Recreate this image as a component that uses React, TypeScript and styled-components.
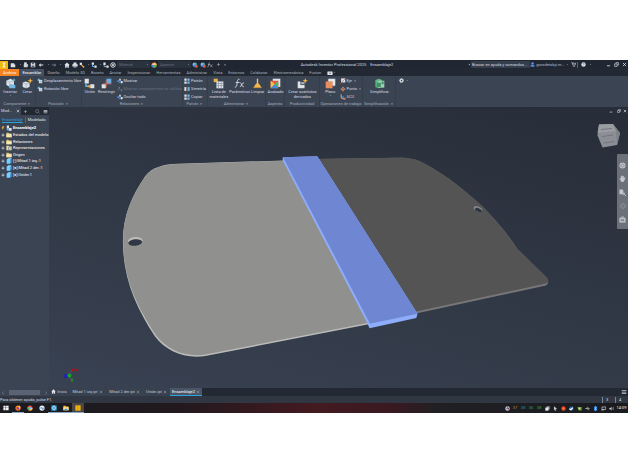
import React from "react";
import styled, { createGlobalStyle } from "styled-components";

const GlobalStyle = createGlobalStyle`
  * { box-sizing: border-box; }
  body { margin: 0; background: #fff; font-family: Roboto, "Open Sans", sans-serif; font-size: 4px; line-height: 6px; color: #d8dce3; }
  button, input, select { font: inherit; color: inherit; border: 0; margin: 0; padding: 0; background: none; border-radius: 0; }
  button { display: flex; align-items: center; justify-content: center; white-space: nowrap; cursor: pointer; }
  svg { display: block; flex: none; }
  h1, h2, p, ul { margin: 0; padding: 0; font: inherit; list-style: none; }
`;

/* ---------- icons, all on a 16 unit grid ---------- */

const W = "#dfe3e8";
const B = "#74b8e4";

const drawings: Record<string, React.ReactNode> = {
  logo: <><rect width="16" height="16" fill="#f2b90c" /><path d="M5 3h6v2H9.500v6H11v2H5v-2h1.500V5H5z" fill="#fff6d5" /></>,
  file: <><path d="M2 3h8l4 4v7H2z" fill={W} /><path d="M10 3v4h4" fill="#8b93a0" /></>,
  open: <><path d="M3 1h7v8H3z" fill={W} /><path d="M2 6h12l-2 8H2z" fill="#cfd4db" /></>,
  save: <><path d="M2 2h12v12H2z" fill={W} /><path d="M5 2h6v4H5zM4 9h8v5H4z" fill="#596270" /></>,
  undo: <path d="M7 3 2 8l5 5V9.500h7v-3H7z" fill={W} />,
  redo: <path d="m9 3 5 5-5 5V9.500H2v-3h7z" fill="#6c7482" />,
  caret: <path d="M4 6h8l-4 5z" fill="#aab0ba" />,
  caretRight: <path d="M5 3v10l6-5z" fill="#c9ced6" />,
  home: <path d="M8 1 1 8h2v7h4v-4h2v4h4V8h2z" fill={W} />,
  printer: <><path d="M4 1h8v5H4zM1 6h14v6H1z" fill={W} /><path d="M4 10h8v5H4z" fill="#96a0ad" /></>,
  brush: <><path d="M2 2h6v6H2z" fill={W} /><path d="m6 5 9 8-3 3-7-8z" fill="#eeb04a" /></>,
  link: <><path d="M2 1h6v6H2zM9 9h6v6H9z" fill={W} /><path d="M4 7v5h5" stroke={B} strokeWidth="2.500" fill="none" /></>,
  ring: <><circle cx="8" cy="8" r="6" fill="none" stroke={W} strokeWidth="2.500" /><path d="M5 5l6 6M11 5l-6 6" stroke={W} strokeWidth="2" /></>,
  sphere: <><circle cx="8" cy="8" r="7" fill="#e95d4b" /><path d="M8 1a7 7 0 0 1 7 7H8z" fill="#f6c744" /><path d="M8 15a7 7 0 0 1-7-7h7z" fill="#3f7fe0" /><path d="M15 8a7 7 0 0 1-7 7V8z" fill="#4cb963" /><circle cx="6" cy="6" r="2.500" fill="#fff" opacity=".7" /></>,
  sphereEdit: <><circle cx="7" cy="7" r="6" fill="#4b86df" /><path d="M7 1a6 6 0 0 1 6 6H7z" fill="#58b56c" /><path d="M8 8h7v7H8z" fill="#e2573f" /><circle cx="5" cy="5" r="2" fill="#fff" opacity=".8" /></>,
  plus: <path d="M7 3h2v4h4v2H9v4H7V9H3V7h4z" fill="#aab0ba" />,
  fx: <><path d="M8 2C5 1 5 4 4.500 8S3 14 1 13M2.500 6.500H8" stroke={W} strokeWidth="1.300" fill="none" /><path d="M9 7c2-1 2 7 5.500 5.500M14.500 7C12 6 11 13 8.500 12.500" stroke={W} strokeWidth="1.200" fill="none" /></>,
  user: <><circle cx="8" cy="5" r="4" fill="#5f94ee" /><path d="M2 10h12v5H2z" fill="#5f94ee" /></>,
  cart: <><path d="M1 2h3l2 8h7l2-6H5" fill="none" stroke={W} strokeWidth="2" /><circle cx="7" cy="13.500" r="1.500" fill={W} /><circle cx="12" cy="13.500" r="1.500" fill={W} /></>,
  help: <><circle cx="8" cy="8" r="7" fill={W} /><path d="M5.500 6.500c0-4 5-3.500 5-.5C10.500 8 8 8 8 10M8 11.500v2" fill="none" stroke="#2a6cc4" strokeWidth="1.800" /></>,
  minimize: <path d="M3 11h10v2.500H3z" fill={W} />,
  restore: <><path d="M6 5V2h8v8h-3" fill="none" stroke={W} strokeWidth="2" /><path d="M2 6h8v8H2z" fill="none" stroke={W} strokeWidth="2" /></>,
  close: <path d="m3 3 10 10M13 3 3 13" stroke={W} strokeWidth="2.500" />,
  closeDim: <path d="m3 3 10 10M13 3 3 13" stroke="#a4abb6" strokeWidth="2" />,
  insert: <><path d="m2 4 6-3 5 3v6l-6 3-5-3z" fill={W} /><path d="m2 4 5 2 6-2M7 6v7" stroke="#9fb0bf" fill="none" /><path d="M6 9h5l1 1h3v5H6z" fill={B} /><path d="M13 1v4M11 3h4" stroke={B} strokeWidth="1.200" /></>,
  create: <><path d="m1 7 4-2 6 2v6l-5 2-5-2z" fill={W} /><path d="m1 7 5 2 5-2M6 9v6" stroke="#9aa3af" fill="none" /><path d="m12 0 1 3 3 1-3 1-1 3-1-3-3-1 3-1z" fill="#f5b83d" /></>,
  derive: <><path d="M1 5h4v5h6v5H1z" fill={W} /><path d="M6 6h5v3H6z" fill="#aab3bf" /><path d="m12 0 1 3 3 1-3 1-1 3-1-3-3-1 3-1z" fill="#f5b83d" /></>,
  move: <><path d="M5 5h9v9H5z" fill={W} /><path d="M2 2h5v3H5v3H2z" fill={B} /><path d="M10 5v9M5 10h9" stroke="#8994a3" /></>,
  joint: <><path d="M1 1h6v7H1zM9 9h6v6H9z" fill={W} /><path d="M3 8v4h5" stroke={B} strokeWidth="2" fill="none" /><circle cx="8" cy="12" r="2" fill="#eaa746" /></>,
  constrain: <><path d="M8 1h7v7H8z" fill="#6aaee8" /><path d="M1 9h6v6H1z" fill={W} /><path d="M7.500 3v11M3 8.500h12" stroke="#d97568" strokeWidth="1.200" /></>,
  show: <><path d="M6 2h4v5H6zM10 8h5v6h-5z" fill={W} /><path d="M1 6h5v5H1z" fill="#438fe5" /><path d="M6 12h4" stroke={B} strokeWidth="2" /></>,
  showDim: <path d="M4 2h4v5H4zM10 8h4v6h-4zM1 9h5v2H1z" fill="#687180" />,
  pattern: <><path d="M1 1h6v6H1zM1 9h6v6H1z" fill={W} /><path d="M9 1h6v6H9zM9 9h6v6H9z" fill={B} /></>,
  mirror: <><path d="M1 3h5v10H1z" fill={W} /><path d="M10 3h5v10h-5z" fill={B} /><path d="M8 1v14" stroke="#e2a44a" /></>,
  list: <><path d="M1 1h6v5H1z" fill="#e4b153" /><path d="M5 5h10v10H5z" fill={W} /><path d="M8 5v10M12 5v10M5 8h10M5 11h10" stroke="#8791a0" /></>,
  clean: <><path d="M7 1h2v8H7z" fill="#e1c386" /><path d="M6 8h4l4 6H2z" fill="#efb84d" /><path d="M2 14h12" stroke="#c98a35" /></>,
  finish: <><path d="M4 1h11v12H4z" fill={W} /><path d="M1 4h11v11H1z" fill="#eb5a45" /><path d="m1 4 6 5-6 6z" fill="#edc942" /><path d="m1 15 6-6 5 6z" fill="#3d8be5" /><path d="m12 4-5 5 5 6z" fill="#48b968" /></>,
  plane: <><path d="M5 1h10v10H5z" fill="#d6dae0" /><path d="M1 5h10v10H1z" fill="#e88e5d" /><path d="M4 3h9v9" stroke="#fff" fill="none" /></>,
  axis: <><path d="M3 1h11v11H3z" fill={W} /><path d="m1 15 12-12" stroke="#d7663f" strokeWidth="2" /></>,
  point: <path d="m8 1 3 4H9v2h2V5l4 3-4 3V9H9v2h2l-3 4-3-4h2V9H5v2L1 8l4-3v2h2V5H5z" fill="#d98d65" />,
  ucs: <><path d="M3 1v9l9 4" stroke={W} strokeWidth="2" fill="none" /><circle cx="8" cy="8" r="2" fill="#54a9ed" /><path d="M10 10h5v5h-5z" fill="#d87352" /></>,
  simplify: <><path d="m2 3 5-2 5 2v10l-5 2-5-2z" fill="#5bb982" /><path d="M6 4h9v10H6z" fill="#a6cdb7" /><path d="M4 7h6v6H4zM11 5h3v4h-3z" fill="#3e9368" /></>,
  gear: <><circle cx="8" cy="8" r="5" fill="none" stroke={W} strokeWidth="4" strokeDasharray="3 1" /><circle cx="8" cy="8" r="4" fill="none" stroke={W} strokeWidth="3" /></>,
  camera: <><rect x="1" y="4" width="14" height="9" rx="1" fill={W} /><circle cx="8" cy="8.500" r="2" fill="#596270" /></>,
  search: <><circle cx="7" cy="7" r="5" fill="none" stroke="#9ea5b1" strokeWidth="1.500" /><path d="m11 11 4 4" stroke="#9ea5b1" strokeWidth="1.500" /></>,
  menu: <path d="M2 3h12v2.500H2zM2 7h12v2.500H2zM2 11h12v2.500H2z" fill="#c4c9d1" />,
  folder: <><path d="M1 2h6l1 2h7v10H1z" fill="#e0c67e" /><path d="M1 6h14v8H1z" fill="#f7e6ae" /></>,
  reps: <><path d="M1 2h6l1 2h7v10H1z" fill="#f1dfa4" /><path d="M5 6h7v6H5z" fill="#60748b" /><path d="M7 7h5v3H7z" fill="#fff" /></>,
  part: <><path d="m2 4 4-3h9v10l-4 4H2z" fill="#3c9edb" /><path d="M2 4h9v11H2z" fill="#7dcbf6" /><path d="m2 4 4-3h9l-4 3z" fill="#b9e7ff" /></>,
  assembly: <><path d="M2 1h6v7H2zM7 8h8v7H7z" fill={W} /><path d="M2 8h5v6H2z" fill={B} /></>,
  bolt: <path d="M7 0h6L9 6h4L4 16l2-7H2z" fill="#f3a72d" />,
  expand: <path d="M6.500 2h3v4.500H14v3H9.500V14h-3V9.500H2v-3h4.500z" fill="#d2d6dd" />,
  left: <path d="M11 2 5 8l6 6" stroke="#8f98a6" strokeWidth="2" fill="none" />,
  right: <path d="m5 2 6 6-6 6" stroke="#8f98a6" strokeWidth="2" fill="none" />,
  wheel: <><circle cx="8" cy="8" r="7" fill="#bfc3c8" /><circle cx="8" cy="8" r="3.500" fill="none" stroke="#7e838b" strokeWidth="1.500" /><path d="M1 8h4M11 8h4" stroke="#7e838b" /></>,
  hand: <path d="M4 8V3h2v4V1h2v6l1-5h2v6l2-3h2l-3 8-2 3H6L1 9l1-1z" fill="#c3c7cc" />,
  zoom: <><path d="M1 1h7l2 3v8H1z" fill="#c3c7cc" /><circle cx="11" cy="11" r="3" fill="#adb1b8" /><path d="m13 13 3 3" stroke="#d2d5d9" strokeWidth="2" /></>,
  orbit: <><path d="m8 1 7 7-7 7-7-7z" fill="#878c94" /><path d="M4 8h8M8 4v8" stroke="#6b7079" strokeWidth="2" /></>,
  look: <><path d="M1 4h14v11H1z" fill="#c0c4c9" /><path d="M4 7h8v5H4z" fill="#858b94" /><path d="M5 1h6v3H5z" fill="#b2b6bc" /></>,
  windows: <path d="M1 2h6v5H1zM8 2h7v5H8zM1 8h6v6H1zM8 8h7v6H8z" fill="#f4f4f4" />,
  firefox: <><circle cx="8" cy="8" r="7" fill="#f36a28" /><circle cx="9" cy="8" r="3.500" fill="#6a3bc9" /><path d="M2 5c5-3 7-1 11-4 2 4 2 8-1 11 0-5-4-8-10-7z" fill="#ffbd38" /></>,
  chrome: <><circle cx="8" cy="8" r="7" fill="#e94637" /><path d="M8 8 1 5c-1 6 3 10 6 10z" fill="#39a757" /><path d="M8 8h7c0 4-3 7-8 7z" fill="#f7c936" /><circle cx="8" cy="8" r="3.500" fill="#fff" /><circle cx="8" cy="8" r="2.500" fill="#4285f4" /></>,
  swirl: <><circle cx="8" cy="8" r="7" fill="#e4edf8" /><path d="M3 9c4-6 8 5 10-2M8 9l3 4" stroke="#4779b8" strokeWidth="2.500" fill="none" /></>,
  app: <><rect x="1" y="1" width="14" height="14" fill="#28a6e3" /><path d="M8 2v12M2 8h12" stroke="#fff" strokeWidth="3" /><path d="M6 6h4v4H6z" fill="#126dac" /></>,
  explorer: <><path d="M1 2h6l1 2h7v10H1z" fill="#f2ba31" /><path d="M1 6h14v8H1z" fill="#ffe194" /><path d="M4 10h8v4H4z" fill="#399ddc" /></>,
  inventor: <><rect x="1" y="1" width="14" height="14" fill="#f2b90c" /><path d="M6 4h4v8H6z" fill="#d39a05" /></>,
  discord: <><circle cx="8" cy="8" r="7" fill="#d8d5df" /><path d="M8 1v7l6 4" stroke="#df4956" strokeWidth="3" /><circle cx="7" cy="8" r="3" fill="#5870d1" /></>,
  layers: <><path d="M5 1h10v10H5z" fill="#9ea3ab" /><path d="M1 5h10v10H1z" fill="#e3e5e8" /></>,
  cursor: <path d="m3 1 10 8-5 1 3 5-3 1-2-5-3 3z" fill="#bfc3ca" />,
  red: <><circle cx="8" cy="8" r="7" fill="#e54724" /><circle cx="8" cy="8" r="3" fill="#ef954b" /></>,
  steam: <><circle cx="8" cy="8" r="7" fill="#285e9b" /><path d="m1 9 5 3 6-7" stroke="#fff" strokeWidth="4" fill="none" /></>,
  nvidia: <><path d="M1 3h14v11H5z" fill="#649b32" /><circle cx="8" cy="8" r="3" fill="#d4dbc9" /></>,
  usb: <path d="M1 8h14M4 8l4-4h3M6 8l4 4h3" stroke="#cdd1d7" strokeWidth="2" fill="none" />,
  bluetooth: <><rect x="3" width="10" height="16" rx="5" fill="#2180e3" /><path d="m5 5 6 6-3 3V2l3 3-6 6" fill="none" stroke="#fff" /></>,
  network: <path d="M3 3h12v8H3zM8 11v3M1 13h6" fill="none" stroke={W} strokeWidth="2" />,
  sound: <><path d="M1 6h3l4-4v12l-4-4H1z" fill="#c8ccd2" /><path d="M10 5c2 2 2 4 0 6M13 3c3 3 3 7 0 10" stroke="#c8ccd2" strokeWidth="1.500" fill="none" /></>,
};

const Icon = ({ name, size = 6 }: { name: string; size?: number }) => (
  <svg width={size} height={size} viewBox="0 0 16 16" aria-hidden="true">{drawings[name]}</svg>
);

/* ---------- frame ---------- */

const Screen = styled.main`
  margin-top: 60px;
  display: flex;
  flex-direction: column;
  background: #2c333f;
  overflow: hidden;
`;

const TitleBar = styled.header`
  display: flex;
  align-items: center;
  height: 9px;
  background: #202732;
`;
const Tool = styled.button<{ $w: number }>`
  flex: none;
  width: ${(p) => p.$w}px;
  height: 8px;
`;
const PickerBox = styled.label`
  display: flex;
  align-items: center;
  width: 33px;
  height: 7px;
  padding: 0 1px 0 2px;
  background: #2a323e;
`;
const Picker = styled.select`
  appearance: none;
  flex: 1;
  min-width: 0;
  height: 7px;
  color: #68717f;
  font-style: italic;
`;
const AppTitle = styled.h1`
  flex: 1;
  display: flex;
  justify-content: center;
  gap: 4px;
  white-space: nowrap;
`;
const Search = styled.input`
  width: 59px;
  height: 7px;
  padding: 0 1px;
  background: #343d4a;
  &::placeholder { color: #d8dce3; opacity: 1; }
`;
const Account = styled.button`
  width: 39px;
  gap: 1px;
  color: #b8bec8;
`;
const Separator = styled.span`
  width: 1px;
  height: 6px;
  background: #596270;
`;
const AppControls = styled.div`
  display: flex;
  margin-left: 12px;
`;

const RibbonTabs = styled.nav`
  display: flex;
  height: 7px;
  background: #222933;
`;
const RibbonTab = styled.button<{ $tone?: "file" | "active" }>`
  padding: 0 3px;
  height: 7px;
  color: ${(p) => (p.$tone ? "#fff" : "#aab1bd")};
  background: ${(p) => (p.$tone === "file" ? "#f58220" : p.$tone === "active" ? "#465061" : "none")};
`;

const Ribbon = styled.section`
  display: flex;
  height: 31px;
  background: #3b4453;
`;
const Group = styled.section<{ $w: number }>`
  flex: none;
  width: ${(p) => p.$w}px;
  display: flex;
  flex-direction: column;
  border-right: 1px solid #353d4a;
`;
const GroupBody = styled.div`
  flex: 1;
  display: flex;
  padding: 1px 0 0 1px;
`;
const GroupName = styled.h2`
  display: flex;
  align-items: center;
  justify-content: center;
  gap: 1px;
  height: 6px;
  color: #a3abb8;
  white-space: nowrap;
`;
const Big = styled.button`
  flex: 1 1 auto;
  flex-direction: column;
  justify-content: flex-start;
  line-height: 5px;
  padding-top: 1px;
  height: 24px;
  white-space: pre;
`;
const Stack = styled.div`
  display: flex;
  flex-direction: column;
  flex: none;
`;
const Small = styled.button<{ $dim?: boolean }>`
  justify-content: flex-start;
  height: 8px;
  gap: 1px;
  color: ${(p) => (p.$dim ? "#687180" : "#d8dce3")};
`;

const Work = styled.div`
  display: flex;
  height: 289px;
`;
const Browser = styled.aside`
  flex: none;
  width: 49px;
  display: flex;
  flex-direction: column;
  background: #3b4453;
  overflow: hidden;
`;
const BrowserTabs = styled.div`
  display: flex;
  align-items: center;
  height: 8px;
  background: #222933;
`;
const BrowserTab = styled.button`
  width: 21px;
  height: 8px;
  gap: 4px;
  background: #3b4453;
`;
const Modes = styled.div`
  display: flex;
  align-items: center;
  height: 10px;
  padding-left: 2px;
  gap: 2px;
`;
const Mode = styled.button<{ $on?: boolean }>`
  height: 6px;
  font-family: "Liberation Sans Narrow", Roboto, sans-serif;
  color: ${(p) => (p.$on ? "#2ea3dc" : "#e5e8ec")};
  text-decoration: ${(p) => (p.$on ? "underline" : "none")};
`;
const Tree = styled.ul`
  display: grid;
  grid-template-rows: repeat(8, 1fr);
  height: 53px;
`;
const Node = styled.button<{ $bold?: boolean }>`
  height: 100%;
  padding-left: 1px;
  gap: 1px;
  font-family: "Liberation Sans Narrow", Roboto, sans-serif;
  font-weight: ${(p) => (p.$bold ? 700 : 400)};
  color: #fff;
`;
const Scroller = styled.div`
  margin-top: auto;
  display: flex;
  align-items: center;
  justify-content: space-between;
  height: 7px;
  padding: 0 1px;
`;
const Thumb = styled.span`
  width: 31px;
  height: 5px;
  background: #596373;
`;

const Right = styled.section`
  flex: 1;
  min-width: 0;
  display: flex;
  flex-direction: column;
`;
const Viewport = styled.div`
  position: relative;
  flex: 1;
  min-height: 0;
  background: linear-gradient(195deg, #282e39 5%, #2f3643 42%, #394252 100%);
`;
const Scene = styled.svg`
  width: 100%;
  height: 100%;
`;
const WindowControls = styled.div`
  position: absolute;
  top: 0;
  right: 0;
  display: flex;
`;
const NavBar = styled.nav`
  position: absolute;
  top: 47px;
  right: 0;
  width: 11px;
  height: 75px;
  padding: 7px 0 6px;
  display: flex;
  flex-direction: column;
  align-items: center;
  justify-content: space-between;
  background: #6b7079;
  border-radius: 1px;
`;
const DocTabs = styled.nav`
  display: flex;
  height: 8px;
  background: #222933;
`;
const DocTab = styled.button<{ $w: number; $on?: boolean }>`
  width: ${(p) => p.$w}px;
  height: 8px;
  gap: 1px;
  background: ${(p) => (p.$on ? "#4a5668" : "#384150")};
  border-bottom: 1px solid ${(p) => (p.$on ? "#2ea3dc" : "#384150")};
  color: ${(p) => (p.$on ? "#fff" : "#c3c8d0")};
`;
const Spring = styled.span`
  flex: 1;
`;
const Status = styled.footer`
  display: flex;
  align-items: center;
  height: 7px;
  background: #303742;
`;
const Count = styled.span`
  width: 13px;
  padding-left: 3px;
  border-left: 1px solid #7b8492;
`;
const Taskbar = styled.footer`
  display: flex;
  align-items: center;
  height: 10px;
  background: linear-gradient(90deg, #1a1c20 0, #21191e 28%, #431a20 50%, #3a1920 62%, #202024 70%, #1a1b1e 100%);
`;
const Task = styled.button<{ $open?: boolean; $on?: boolean }>`
  width: 12px;
  height: 10px;
  background: ${(p) => (p.$on ? "#4b4744" : "none")};
  border-bottom: 1px solid ${(p) => (p.$open ? "#8aa6c4" : "transparent")};
`;
const Tray = styled.div`
  display: flex;
  align-items: center;
`;
const TrayItem = styled.button<{ $c?: string }>`
  width: 8px;
  height: 8px;
  color: ${(p) => p.$c || "#fff"};
`;
const Clock = styled.time`
  width: 13px;
  text-align: center;
  color: #f1f1f1;
`;

const quickTools: [string, number, string][] = [
  ["logo", 8, "Inventor"], ["file", 10, "Nuevo"], ["caret", 4, "Opciones de nuevo"], ["open", 7, "Abrir"], ["save", 7, "Guardar"],
  ["undo", 10, "Deshacer"], ["caret", 4, "Historial"], ["redo", 8, "Rehacer"], ["caret", 4, "Acciones"], ["home", 10, "Inicio"],
  ["printer", 6, "Imprimir"], ["brush", 8, "Actualizar"], ["caret", 4, "Opciones de actualizar"], ["link", 8, "Seleccionar"],
  ["caret", 4, "Opciones de selección"], ["joint", 7, "Propiedades"], ["ring", 8, "Ajustes"],
];
const tabs = ["Diseño", "Modelo 3D", "Boceto", "Anotar", "Inspeccionar", "Herramientas", "Administrar", "Vista", "Entornos", "Colaborar", "Electromecánica", "Fusion"];
const tree: [string, string][] = [
  ["assembly", "Ensamblaje2"], ["folder", "Estados del modelo: [Pr"], ["folder", "Relaciones"], ["reps", "Representaciones"],
  ["folder", "Origen"], ["part", "[-]:Mitad 1 izq.:1"], ["part", "[●]:Mitad 2 der.:1"], ["part", "[●]:Unión:1"],
];
const docs: [string, number][] = [["Mitad 1 izq.ipt", 37], ["Mitad 2 der.ipt", 37], ["Unión.ipt", 27]];
const navTools: [string, number, string][] = [["wheel", 7, "Rueda de navegación"], ["hand", 7, "Encuadre"], ["zoom", 7, "Zoom"], ["orbit", 8, "Órbita"], ["look", 7, "Mirar a"]];
const tasks: [string, boolean, string][] = [["windows", false, "Menú Inicio"], ["firefox", true, "Firefox"], ["chrome", false, "Chrome"], ["swirl", false, "Navegador"], ["app", true, "Aplicación"], ["explorer", true, "Explorador"], ["inventor", true, "Inventor"]];
const temperatures: [string, string][] = [["37", "#b58c24"], ["38", "#267fb4"], ["36", "#249e65"], ["38", "#3f9d34"]];
const trayIcons = ["layers", "cursor", "red", "steam", "nvidia", "usb", "bluetooth", "network", "sound"];

const IconButton = ({ icon, label, w = 8, size = 6 }: { icon: string; label: string; w?: number; size?: number }) => (
  <Tool $w={w} aria-label={label}><Icon name={icon} size={size} /></Tool>
);

const PickerField = ({ label }: { label: string }) => (
  <PickerBox>
    <Picker aria-label={label}><option>{label}</option></Picker>
    <Icon name="caret" size={3} />
  </PickerBox>
);

const RibbonGroup = ({ name, w, menu, children }: { name: string; w: number; menu?: boolean; children: React.ReactNode }) => (
  <Group $w={w}>
    <GroupBody>{children}</GroupBody>
    <GroupName>{name}{menu && <Icon name="caret" size={4} />}</GroupName>
  </Group>
);
const BigButton = ({ icon, children, menu }: { icon: string; children: React.ReactNode; menu?: boolean }) => (
  <Big><Icon name={icon} size={11} /><span>{children}</span>{menu && <Icon name="caret" size={3} />}</Big>
);
const SmallButton = ({ icon, children, dim, menu }: { icon: string; children: React.ReactNode; dim?: boolean; menu?: boolean }) => (
  <Small $dim={dim} disabled={dim}><Icon name={icon} /><span>{children}</span>{menu && <Icon name="caret" size={4} />}</Small>
);

const Model = () => (
  <Scene viewBox="49 107 579 280" role="img" aria-label="Ensamblaje de tres piezas">
    <path d="M317 158.500 398 157.200C410 157 418 159 426 164 445 174 464 189 483 206.500 498 222 508 234 517 248L547 277.500Q550 282 546 285L416 313Z" fill="#777" />
    <path d="M317 158.500 398 157.200C410 157 418 159 426 164 445 174 464 189 483 206.500 498 222 508 234 517 248L547 277.500Q550 281 546 283L416 311Z" fill="#545454" />
    <ellipse cx="478" cy="208.500" rx="4.500" ry="2.400" transform="rotate(22 478 208.500)" fill="#85878a" />
    <ellipse cx="478.500" cy="209.500" rx="3.600" ry="1.700" transform="rotate(22 478.500 209.500)" fill="#2e3541" />
    <path d="M284 160 178 163.200C164 163.500 151 167 145 176 132 195 123 215 122.900 240 122.800 278 136 307 155 336 166 350 182 358 204 355.800L370 323.500 300 190Z" fill="#bbbbb9" />
    <path d="M284 160.300 178 163.400C164 163.800 151 167.300 145.200 176.300 132 195 123.200 215 123.200 240 123.200 278 137 306 156 334.700 167 348.500 183 356.500 204 354.300L370 322 300 190Z" fill="#90908e" />
    <ellipse cx="135.300" cy="240.500" rx="7.400" ry="4" transform="rotate(-5 135 240.500)" fill="#bdbdbb" />
    <ellipse cx="135.200" cy="242" rx="7" ry="3.200" transform="rotate(-5 135 242)" fill="#303846" />
    <path d="m282.700 156.700 34.600-1L417.500 313.300 416.300 317.500 369.500 327.700 367 322 282.700 160Z" fill="#8eadfd" />
    <path d="m283 156.700 34.300-1L417.500 313.300 370 323.300Z" fill="#6f87d3" />
    <path d="m68 375 5-6M68 375l4 5" stroke="#4c5667" strokeWidth="1" />
    <circle cx="73" cy="369.500" r="1.500" fill="#b80d18" />
    <path d="m75.500 368 2.500 3m0-3-2.500 3" stroke="#b80d18" />
    <path d="M64.500 373.500h2.500v4h-2.500z" fill="#1920c9" />
    <circle cx="69.500" cy="375" r="2" fill="#17a51d" />
    <path d="m70.500 378 1.500 1.500 1.500-1.500m-1.500 1.500v2" stroke="#17a51d" fill="none" />
    <path d="m599 124 14-.500 7 9-3 12-14.500 2.500-5-12Z" fill="#8b8f95" />
    <path d="m599 124 14-.500 3 7-18.500 2Z" fill="#999da2" />
    <path d="m613 123.500 7 9-3 12-1-14Z" fill="#7c8188" />
    <path d="m601 129 11-1M602 136l11-1.500M603.500 142.500l11-1.500" stroke="#71767e" strokeWidth="1" />
  </Scene>
);

export default function App() {
  return (
    <>
      <GlobalStyle />
      <Screen>
        <TitleBar>
          {quickTools.map(([icon, w, label], i) => (
            <IconButton key={i} icon={icon} w={w} label={label} size={icon === "caret" ? 3 : icon === "logo" ? 8 : 6} />
          ))}
          <PickerField label="Material" />
          <IconButton icon="sphere" label="Aspectos" />
          <PickerField label="Aspecto" />
          <IconButton icon="sphereEdit" label="Ajustar aspecto" />
          <IconButton icon="sphereEdit" w={7} label="Borrar aspecto" />
          <IconButton icon="fx" label="Parámetros" />
          <IconButton icon="plus" size={5} label="Añadir" />
          <IconButton icon="caret" w={5} size={4} label="Personalizar" />
          <AppTitle><span>Autodesk Inventor Professional 2025</span><span>Ensamblaje2</span></AppTitle>
          <IconButton icon="caretRight" w={4} size={3} label="Mostrar búsqueda" />
          <Search aria-label="Buscar" placeholder="Buscar en ayuda y comandos..." />
          <Account><Icon name="user" size={5} />gorodetskyi.m...<Icon name="caret" size={3} /></Account>
          <IconButton icon="cart" size={5} label="Tienda" />
          <Separator />
          <IconButton icon="help" w={10} size={5} label="Ayuda" />
          <IconButton icon="caret" w={4} size={3} label="Más ayuda" />
          <AppControls>
            <IconButton icon="minimize" size={5} label="Minimizar" />
            <IconButton icon="restore" size={5} label="Restaurar" />
            <IconButton icon="close" size={5} label="Cerrar" />
          </AppControls>
        </TitleBar>

        <RibbonTabs>
          <RibbonTab $tone="file">Archivo</RibbonTab>
          <RibbonTab $tone="active">Ensamblar</RibbonTab>
          {tabs.map((t) => <RibbonTab key={t}>{t}</RibbonTab>)}
          <RibbonTab aria-label="Vista de cinta"><Icon name="camera" size={6} /><Icon name="caret" size={3} /></RibbonTab>
        </RibbonTabs>

        <Ribbon>
          <RibbonGroup name="Componente" w={36} menu>
            <BigButton icon="insert" menu>Insertar</BigButton>
            <BigButton icon="create">Crear</BigButton>
          </RibbonGroup>
          <RibbonGroup name="Posición" w={46} menu>
            <Stack>
              <SmallButton icon="move">Desplazamiento libre</SmallButton>
              <SmallButton icon="move">Rotación libre</SmallButton>
            </Stack>
          </RibbonGroup>
          <RibbonGroup name="Relaciones" w={101} menu>
            <BigButton icon="joint">Unión</BigButton>
            <BigButton icon="constrain">Restringir</BigButton>
            <Stack>
              <SmallButton icon="show">Mostrar</SmallButton>
              <SmallButton icon="showDim" dim>Mostrar componentes no válidos</SmallButton>
              <SmallButton icon="show">Ocultar todo</SmallButton>
            </Stack>
          </RibbonGroup>
          <RibbonGroup name="Patrón" w={25} menu>
            <Stack>
              <SmallButton icon="pattern">Patrón</SmallButton>
              <SmallButton icon="mirror">Simetría</SmallButton>
              <SmallButton icon="pattern">Copiar</SmallButton>
            </Stack>
          </RibbonGroup>
          <RibbonGroup name="Administrar" w={58} menu>
            <BigButton icon="list">{"Lista de\nmateriales"}</BigButton>
            <BigButton icon="fx">Parámetros</BigButton>
            <BigButton icon="clean">Limpiar</BigButton>
          </RibbonGroup>
          <RibbonGroup name="Aspecto" w={19}>
            <BigButton icon="finish">Acabado</BigButton>
          </RibbonGroup>
          <RibbonGroup name="Productividad" w={35}>
            <BigButton icon="derive">{"Crear sustitutos\nderivados"}</BigButton>
          </RibbonGroup>
          <RibbonGroup name="Operaciones de trabajo" w={43}>
            <BigButton icon="plane" menu>Plano</BigButton>
            <Stack>
              <SmallButton icon="axis" menu>Eje</SmallButton>
              <SmallButton icon="point" menu>Punto</SmallButton>
              <SmallButton icon="ucs">SCU</SmallButton>
            </Stack>
          </RibbonGroup>
          <RibbonGroup name="Simplificación" w={33} menu>
            <BigButton icon="simplify">Simplificar</BigButton>
          </RibbonGroup>
          <IconButton icon="gear" w={10} size={5} label="Configuración" />
          <IconButton icon="caret" w={3} size={3} label="Más opciones" />
        </Ribbon>

        <Work>
          <Browser>
            <BrowserTabs>
              <BrowserTab>Mod...<Icon name="close" size={4} /></BrowserTab>
              <IconButton icon="plus" size={5} label="Añadir panel" />
              <Spring />
              <IconButton icon="search" size={5} label="Buscar en el navegador" />
              <IconButton icon="menu" size={5} label="Menú del navegador" />
            </BrowserTabs>
            <Modes>
              <Mode $on>Ensamblaje</Mode>
              <Separator />
              <Mode>Modelado</Mode>
            </Modes>
            <Tree>
              {tree.map(([icon, label], i) => (
                <li key={label}>
                  <Node $bold={i === 0}>
                    <Icon name={i === 0 ? "bolt" : "expand"} size={4} />
                    <Icon name={icon} size={6} />
                    {label}
                  </Node>
                </li>
              ))}
            </Tree>
            <Scroller><Icon name="left" size={4} /><Thumb /><Icon name="right" size={4} /></Scroller>
          </Browser>

          <Right>
            <Viewport>
              <Model />
              <WindowControls>
                <IconButton icon="minimize" size={4} label="Minimizar documento" />
                <IconButton icon="restore" size={4} w={7} label="Restaurar documento" />
                <IconButton icon="close" size={4} w={6} label="Cerrar documento" />
              </WindowControls>
              <NavBar>
                {navTools.map(([icon, size, label]) => <IconButton key={icon} icon={icon} size={size} label={label} />)}
              </NavBar>
            </Viewport>
            <DocTabs>
              <DocTab $w={20}><Icon name="home" size={5} />Inicio</DocTab>
              {docs.map(([name, w]) => <DocTab key={name} $w={w}>{name}<Icon name="closeDim" size={4} /></DocTab>)}
              <DocTab $w={32} $on>Ensamblaje2<Icon name="closeDim" size={4} /></DocTab>
              <Spring />
              <IconButton icon="menu" label="Lista de documentos" />
            </DocTabs>
          </Right>
        </Work>

        <Status>
          <p>Para obtener ayuda, pulse F1.</p>
          <Spring />
          <Count>3</Count>
          <Count>4</Count>
        </Status>

        <Taskbar>
          {tasks.map(([icon, open, label]) => (
            <Task key={label} $open={open} $on={icon === "inventor"} aria-label={label}><Icon name={icon} /></Task>
          ))}
          <Spring />
          <Tray>
            <TrayItem aria-label="Notificaciones"><Icon name="discord" size={5} /></TrayItem>
            {temperatures.map(([t, c], i) => <TrayItem key={i} $c={c}>{t}</TrayItem>)}
            {trayIcons.map((n) => <TrayItem key={n} aria-label={n}><Icon name={n} size={5} /></TrayItem>)}
            <Clock>14:09</Clock>
          </Tray>
        </Taskbar>
      </Screen>
    </>
  );
}
